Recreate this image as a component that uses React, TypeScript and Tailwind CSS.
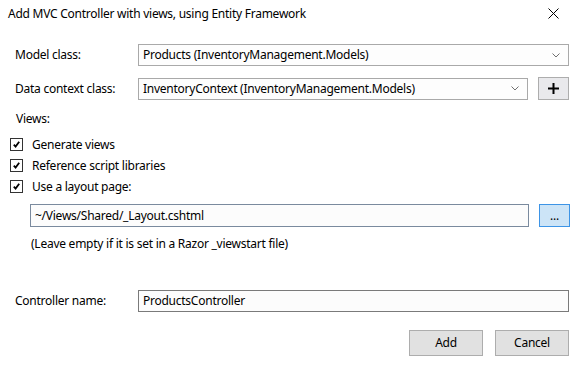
import React from 'react';

// Windows-style "Add MVC Controller" dialog

const Chevron: React.FC = () => (
  <svg width="8" height="5" viewBox="0 0 8 5" className="shrink-0">
    <path d="M0.5 0.5 L4 4 L7.5 0.5" fill="none" stroke="#707070" strokeWidth="1" />
  </svg>
);

const Check: React.FC<{ label: string }> = ({ label }) => (
  <div className="flex h-[21px] items-center -ml-[5px]">
    <div className="flex h-[13px] w-[13px] items-center justify-center border border-[#333333] bg-white">
      <svg width="9" height="9" viewBox="0 0 9 9">
        <path d="M1.8 4.6 L3.6 6.6 L7.2 1.8" fill="none" stroke="#000" strokeWidth="1.8" />
      </svg>
    </div>
    <span className="ml-[9px]">{label}</span>
  </div>
);

const Combo: React.FC<{ value: string; className?: string }> = ({ value, className }) => (
  <div className={`flex h-[22px] items-center justify-between border border-[#a9a9a9] bg-[#fdfdfd] pl-[4px] pr-[8px] ${className ?? ''}`}>
    <span>{value}</span>
    <Chevron />
  </div>
);

export default function App() {
  return (
    <div
      className="h-[391px] w-[581px] overflow-hidden bg-white text-[12px] leading-[16px] tracking-[-0.25px] text-black"
      style={{ fontFamily: '"Noto Sans", "Open Sans", sans-serif' }}
    >
      {/* Title bar */}
      <div className="flex h-[27px] items-center justify-between pl-[8px] pr-[22px]">
        <span>Add MVC Controller with views, using Entity Framework</span>
        <svg width="11" height="11" viewBox="0 0 11 11">
          <path d="M0.5 0.5 L10.5 10.5 M10.5 0.5 L0.5 10.5" stroke="#000" strokeWidth="1" />
        </svg>
      </div>

      <div className="flex flex-col pl-[15px] pr-[12px]">
        {/* Model class */}
        <div className="mt-[17px] flex items-center">
          <span className="w-[123px]">Model class:</span>
          <Combo value="Products (InventoryManagement.Models)" className="flex-1" />
        </div>

        {/* Data context */}
        <div className="mt-[11px] flex items-center">
          <span className="w-[123px]">Data context class:</span>
          <Combo value="InventoryContext (InventoryManagement.Models)" className="flex-1" />
          <button className="ml-[10px] flex h-[23px] w-[31px] items-center justify-center border border-[#adadad] bg-[#e9e9ec]">
            <svg width="11" height="11" viewBox="0 0 11 11">
              <path d="M5.5 0 V11 M0 5.5 H11" stroke="#000" strokeWidth="2" />
            </svg>
          </button>
        </div>

        {/* Views */}
        <div className="mt-[11px] pl-[1px]">Views:</div>
        <div className="mt-[7px] flex flex-col">
          <Check label="Generate views" />
          <Check label="Reference script libraries" />
          <Check label="Use a layout page:" />
        </div>

        <div className="mt-[7px] ml-[15px] flex items-center">
          <div className="flex h-[23px] flex-1 items-center border border-[#7a8a9e] bg-[#fcfcfc] pl-[4px]">
            ~/Views/Shared/_Layout.cshtml
          </div>
          <button className="ml-[10px] mr-[-1px] flex h-[23px] w-[31px] items-end justify-center border border-[#3d94e6] bg-[#cce4f7] pb-[5px] leading-[10px]">
            ...
          </button>
        </div>
        <div className="mt-[9px] pl-[16px]">(Leave empty if it is set in a Razor _viewstart file)</div>

        {/* Controller name */}
        <div className="mt-[38px] flex items-center">
          <span className="w-[123px]">Controller name:</span>
          <div className="flex h-[22px] flex-1 items-center border border-[#7a7a7a] bg-[#fcfcfc] pl-[4px]">
            ProductsController
          </div>
        </div>

        {/* Buttons */}
        <div className="mt-[18px] flex justify-end gap-[12px]">
          <button className="h-[26px] w-[74px] border border-[#adadad] bg-[#e1e1e1]">Add</button>
          <button className="h-[26px] w-[74px] border border-[#adadad] bg-[#e1e1e1]">Cancel</button>
        </div>
      </div>
    </div>
  );
}
